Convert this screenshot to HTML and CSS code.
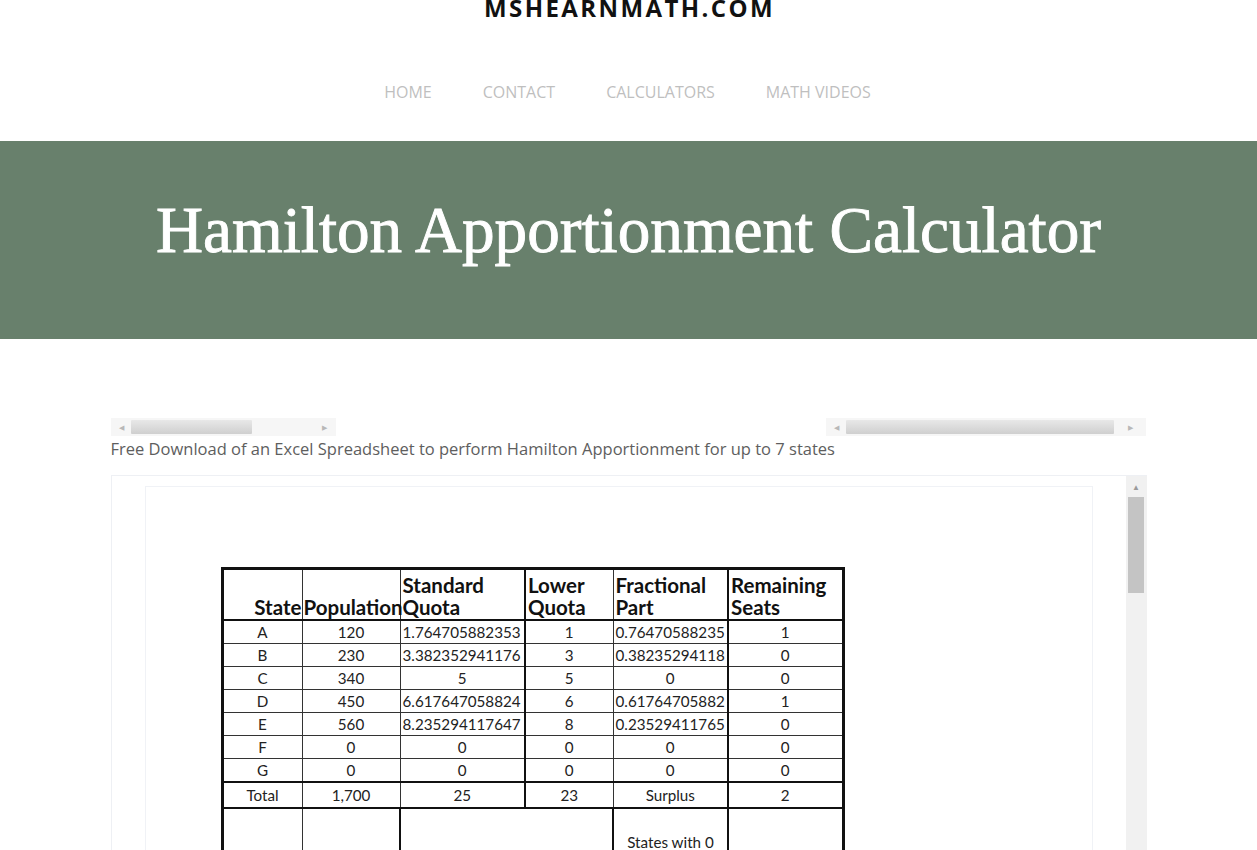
FILE: index.html
```html
<!DOCTYPE html>
<html>
<head>
<meta charset="utf-8">
<link rel="stylesheet" href="styles.css">
</head>
<body>
<header class="site-header">
  <div class="site-title">MSHEARNMATH.COM</div>
  <nav class="nav">
    <a>HOME</a><a>CONTACT</a><a>CALCULATORS</a><a>MATH VIDEOS</a>
  </nav>
</header>
<section class="banner">
  <h1>Hamilton Apportionment Calculator</h1>
</section>
<main class="content">
  <div class="hscrolls">
    <div class="hbar hbar-left"><span class="arr">&#9664;</span><span class="thumb"></span><span class="arr">&#9654;</span></div>
    <div class="hbar hbar-right"><span class="arr">&#9664;</span><span class="thumb"></span><span class="arr">&#9654;</span></div>
  </div>
  <p class="download">Free Download of an Excel Spreadsheet to perform Hamilton Apportionment for up to 7 states</p>
  <div class="frame">
    <div class="sheet">
      <table class="grid">
        <colgroup>
          <col class="c1"><col class="c2"><col class="c3"><col class="c4"><col class="c5"><col class="c6">
        </colgroup>
        <tr class="head">
          <th class="right">State</th><th class="left ov">Population</th><th class="left thickr">Standard<br>Quota</th><th class="left">Lower<br>Quota</th><th class="left thickr">Fractional<br>Part</th><th class="left">Remaining<br>Seats</th>
        </tr>
        <tr><td>A</td><td>120</td><td class="left thickr">1.764705882353</td><td>1</td><td class="left thickr">0.76470588235</td><td>1</td></tr>
        <tr><td>B</td><td>230</td><td class="left thickr">3.382352941176</td><td>3</td><td class="left thickr">0.38235294118</td><td>0</td></tr>
        <tr><td>C</td><td>340</td><td class="thickr">5</td><td>5</td><td class="thickr">0</td><td>0</td></tr>
        <tr><td>D</td><td>450</td><td class="left thickr">6.617647058824</td><td>6</td><td class="left thickr">0.61764705882</td><td>1</td></tr>
        <tr><td>E</td><td>560</td><td class="left thickr">8.235294117647</td><td>8</td><td class="left thickr">0.23529411765</td><td>0</td></tr>
        <tr><td>F</td><td>0</td><td class="thickr">0</td><td>0</td><td class="thickr">0</td><td>0</td></tr>
        <tr class="g"><td>G</td><td>0</td><td class="thickr">0</td><td>0</td><td class="thickr">0</td><td>0</td></tr>
        <tr class="total"><td>Total</td><td>1,700</td><td class="thickr">25</td><td>23</td><td class="thickr">Surplus</td><td>2</td></tr>
        <tr class="extra"><td></td><td class="thickr"></td><td colspan="2" class="thickr"></td><td class="thickr bot">States with 0</td><td class="thickt"></td></tr>
      </table>
    </div>
    <div class="vbar"><span class="up">&#9650;</span><span class="vthumb"></span></div>
  </div>
</main>
</body>
</html>
```
FILE: styles.css
```css
html, body { margin: 0; padding: 0; background: #fff; }
body { font-family: "Open Sans", sans-serif; color: #555; height: 850px; overflow: hidden; }

.site-header { text-align: center; }
.site-title {
  margin-top: -4px;
  font-size: 24px; line-height: 24px; font-weight: 700;
  letter-spacing: 2.4px; color: #111;
  padding-left: 2px;
}
.nav {
  display: flex; justify-content: center; gap: 51px;
  margin-top: 61px; height: 60px;
  font-size: 16px; line-height: 22px; color: #bfbfbf;
  padding-right: 2px;
}
.nav a { display: block; }

.banner {
  background: #68806c; height: 198px;
  display: flex; align-items: center; justify-content: center;
}
.banner h1 {
  margin: 0; color: #fff; font-weight: 400;
  font-family: "Liberation Serif", serif; font-size: 65.2px;
  -webkit-text-stroke: 0.9px #fff;
  position: relative; top: -10px;
}

.content { width: 1036px; margin: 0 auto; padding-top: 79px; }
.hscrolls { display: flex; justify-content: space-between; height: 18px; }
.hbar {
  display: flex; align-items: center; background: #f6f6f6; height: 18px;
  box-sizing: border-box; padding: 0 4px;
}
.hbar .arr { font-size: 7px; color: #b8b8b8; width: 14px; text-align: center; }
.hbar .thumb {
  height: 14px; border-radius: 1px;
  background: linear-gradient(#e8e8e8, #cfcfcf);
}
.hbar-left { width: 225px; }
.hbar-left .thumb { width: 124px; margin-left: 3px; margin-right: 66px; }
.hbar-right { width: 320px; margin-right: 1px; }
.hbar-right .thumb { width: 268px; margin-left: 2px; margin-right: 10px; }

.download { margin: 2px 0 0; font-size: 16.5px; line-height: 22px; color: #5e5e5e; }

.frame {
  margin-top: 15px; border: 1px solid #eef0f4; border-right: none;
  display: flex; height: 400px; box-sizing: border-box;
}
.sheet {
  margin: 10px 33px 0 33px; flex: 1;
  border: 1px solid #f0f2f6; border-bottom: none;
  padding: 80px 0 0 75px;
}
.vbar { width: 21px; background: #f1f1f1; display: flex; flex-direction: column; align-items: center; }
.vbar .up { font-size: 8px; color: #9a9a9a; height: 20px; line-height: 22px; }
.vbar .vthumb { width: 16px; height: 96px; background: #c4c4c4; margin-top: 1px; }

.grid {
  border-collapse: collapse; table-layout: fixed;
  font-family: Lato, "Open Sans", sans-serif; color: #222;
  border: 3px solid #111; width: 621px;
}
.grid col.c1 { width: 80px; }
.grid col.c2 { width: 98px; }
.grid col.c3 { width: 125px; }
.grid col.c4 { width: 88px; }
.grid col.c5 { width: 115px; }
.grid col.c6 { width: 115px; }
.grid th, .grid td {
  border: 1px solid #333; padding: 0 2px; height: 22px;
  font-size: 15.2px; line-height: 20px; text-align: center; white-space: nowrap;
}
.grid th {
  font-size: 20.5px; line-height: 22px; font-weight: 700; color: #111;
  height: 48px; vertical-align: bottom; padding-bottom: 1px; overflow: visible;
}
.grid tr.head th { border-bottom: 2px solid #111; }
.grid .left { text-align: left; }
.grid .right { text-align: right; padding-right: 0; }
.grid th.ov { padding-left: 1px; }
.grid .thickr { border-right: 2px solid #111; }
.grid tr.g td { border-bottom: 2px solid #111; }
.grid tr.total td { height: 24px; border-bottom: 2px solid #111; }
.grid tr.extra td { height: 90px; vertical-align: top; border-bottom: none; }
.grid tr.extra td.bot { padding-top: 23px; font-size: 15.2px; }
.grid tr.extra td:last-child { border-right: 3px solid #111; }
```
